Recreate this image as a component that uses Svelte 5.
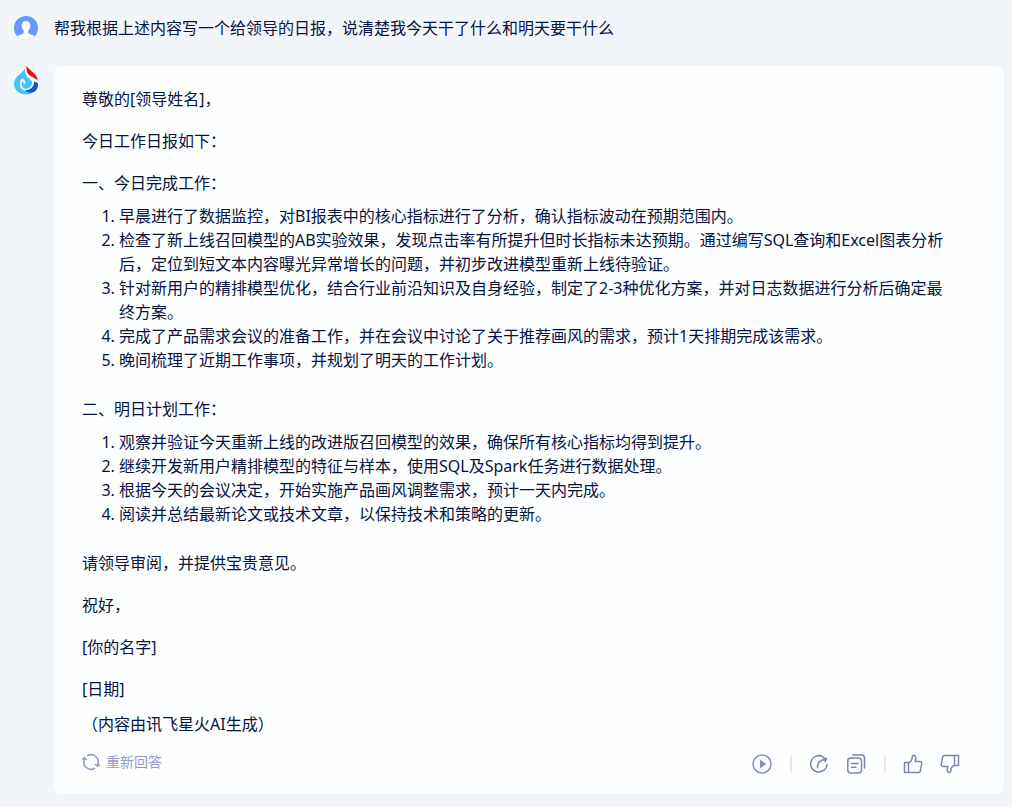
<script>
	const question = '帮我根据上述内容写一个给领导的日报，说清楚我今天干了什么和明天要干什么';

	const intro = ['尊敬的[领导姓名]，', '今日工作日报如下：'];

	const sections = [
		{
			title: '一、今日完成工作：',
			items: [
				'早晨进行了数据监控，对BI报表中的核心指标进行了分析，确认指标波动在预期范围内。',
				'检查了新上线召回模型的AB实验效果，发现点击率有所提升但时长指标未达预期。通过编写SQL查询和Excel图表分析后，定位到短文本内容曝光异常增长的问题，并初步改进模型重新上线待验证。',
				'针对新用户的精排模型优化，结合行业前沿知识及自身经验，制定了2-3种优化方案，并对日志数据进行分析后确定最终方案。',
				'完成了产品需求会议的准备工作，并在会议中讨论了关于推荐画风的需求，预计1天排期完成该需求。',
				'晚间梳理了近期工作事项，并规划了明天的工作计划。'
			]
		},
		{
			title: '二、明日计划工作：',
			items: [
				'观察并验证今天重新上线的改进版召回模型的效果，确保所有核心指标均得到提升。',
				'继续开发新用户精排模型的特征与样本，使用SQL及Spark任务进行数据处理。',
				'根据今天的会议决定，开始实施产品画风调整需求，预计一天内完成。',
				'阅读并总结最新论文或技术文章，以保持技术和策略的更新。'
			]
		}
	];

	const closing = ['请领导审阅，并提供宝贵意见。', '祝好，', '[你的名字]', '[日期]'];
</script>

<main class="chat">
	<div class="message">
		<svg class="avatar" width="24" height="24" viewBox="0 0 24 24" aria-hidden="true">
			<clipPath id="avatar-clip"><circle cx="12" cy="12" r="12" /></clipPath>
			<g clip-path="url(#avatar-clip)">
				<rect width="24" height="24" fill="#6498ff" />
				<path
					fill="#f9fbff"
					d="M12 5c-3 0-4.300 2-4.300 4.700 0 2 .7 3.600 2 4.600v2c0 1-.8 1.500-2 2-2 .8-3.700 1.200-5.200 2.700V24h19v-3c-1.500-1.500-3.200-1.900-5.200-2.700-1.200-.5-2-1-2-2v-2c1.300-1 2-2.600 2-4.600C16.300 7 15 5 12 5z"
				/>
			</g>
		</svg>
		<p class="question">{question}</p>
	</div>

	<div class="message">
		<svg class="avatar" width="24" height="29" viewBox="0 0 24 29" aria-hidden="true">
			<path
				fill="#42c4fa"
				d="M11 2.500C9 7 0 10.500 0 17.500 0 24 5.300 28.500 12 28.500c3 0 5.500-.8 7.500-2.500l-7.500-1.500c4-.5 6.500-3 6.500-6.500 0-3-2-4.500-4-6C12 10 11 7 11 2.500z"
			/>
			<path
				fill="none"
				stroke="#f2f5f9"
				stroke-width="2"
				d="M10.500 17c0-1.800-.8-2.800-2.300-3.500-2.700 3.500-2.200 8.800 3 10.300 4.300.2 7.800-2.300 8-7.300"
			/>
			<path fill="#f10b12" d="M12.400 0c0 6 1 8 4.200 10 2.500 1.500 5.600 2.700 7 4.500C23.500 8 17 5.800 12.400 0z" />
			<path fill="#1453d9" d="M20 15.500c.3 5.500-3.500 8.700-9 9.200 3 2.200 7.500 2.500 10.200.5 2.300-1.800 3.100-4.500 2.800-8-1.200-.9-2.500-1.300-4-1.700z" />
		</svg>

		<article class="card">
			<div class="answer">
				{#each intro as line}
					<p>{line}</p>
				{/each}

				{#each sections as section}
					<p>{section.title}</p>
					<ol>
						{#each section.items as item}
							<li>{item}</li>
						{/each}
					</ol>
				{/each}

				{#each closing as line}
					<p>{line}</p>
				{/each}
			</div>
			<p class="note">（内容由讯飞星火AI生成）</p>

			<footer>
				<button class="retry" type="button">
					<svg width="18" height="18" viewBox="0 0 18 18" aria-hidden="true">
						<path d="M5.500 2.700A7.200 7.200 0 0 1 15.800 11.500M12.500 15.300A7.200 7.200 0 0 1 2.200 6.500" />
						<path d="M.6 6.200l1.800-1.400 2 1.600M17.400 11.800l-1.800 1.400-2-1.600" />
					</svg>
					重新回答
				</button>

				<div class="actions">
					<button class="play" type="button" aria-label="播放">
						<svg width="20" height="20" viewBox="0 0 20 20">
							<circle cx="10" cy="10" r="9" />
							<path class="solid" d="M8 5.500v9l6.300-4.500z" />
						</svg>
					</button>
					<span class="divider"></span>
					<button type="button" aria-label="分享">
						<svg width="20" height="20" viewBox="0 0 20 20">
							<path d="M14 2.800A8.200 8.200 0 1 0 18 10.500" />
							<path d="M8.500 13.800c-.2-4.300 2-7.300 6.500-8" />
							<path class="solid" d="M13.200 2.500l5.300 1.700-2.200 4.900z" />
						</svg>
					</button>
					<button type="button" aria-label="复制">
						<svg width="20" height="20" viewBox="0 0 20 20">
							<rect x="1.800" y="4" width="13.700" height="15" rx="3" />
							<path d="M6.500 1h9a3 3 0 0 1 3 3v10M5.500 9.500h6.500M5.500 13.300h4.500" />
						</svg>
					</button>
					<span class="divider"></span>
					<button type="button" aria-label="赞">
						<svg width="20" height="20" viewBox="0 0 20 20">
							<path
								d="M1.500 8.500h4v10h-4zM5.500 8.800c2.400-.8 3.600-2.700 3.700-5.500 0-3 3.600-2.300 3.600.7 0 1.500-.3 2.500-.6 3.500h4.800c1.300 0 1.900.8 1.700 2l-1.300 7.300c-.2 1.100-.9 1.700-2 1.700H5.500"
							/>
						</svg>
					</button>
					<button type="button" aria-label="踩">
						<svg width="20" height="20" viewBox="0 0 20 20">
							<path
								d="M18.500 11.500h-4v-10h4zM14.500 11.200c-2.400.8-3.600 2.700-3.700 5.500 0 3-3.600 2.300-3.600-.7 0-1.500.3-2.500.6-3.500H3c-1.300 0-1.900-.8-1.700-2l1.300-7.300c.2-1.100.9-1.700 2-1.700h9.900"
							/>
						</svg>
					</button>
				</div>
			</footer>
		</article>
	</div>
</main>

<style>
	:global(body) {
		margin: 0;
		background: #f2f5f9;
	}

	.chat {
		display: flex;
		flex-direction: column;
		gap: 26px;
		padding: 16px 8px 13px 14px;
		color: #07133e;
		font-family: 'Noto Sans', 'Noto Sans CJK SC', sans-serif;
		font-size: 16px;
		line-height: 24px;
	}

	.message {
		display: flex;
		align-items: flex-start;
		gap: 16px;
	}

	.avatar {
		flex: none;
	}

	p {
		margin: 0 0 18px;
	}

	.question {
		margin: 0;
	}

	.card {
		flex: 1;
		min-width: 0;
		padding: 21px 28px 20px;
		border-radius: 8px;
		background: #fdfeff;
		box-sizing: border-box;
	}

	.answer {
		padding-right: 28px;
	}

	ol {
		margin: -9px 0 25px;
		padding-left: 37px;
	}

	.note {
		margin: -7px 0 16px;
	}

	footer {
		display: flex;
		align-items: flex-start;
		justify-content: space-between;
		padding-right: 16px;
	}

	button {
		display: flex;
		align-items: center;
		padding: 0;
		border: 0;
		background: none;
		color: #7e84ae;
		font: inherit;
		cursor: pointer;
	}

	.retry {
		gap: 6px;
		color: #9799c4;
		font-size: 14px;
		line-height: 20px;
	}

	.play {
		color: #8b8dc5;
	}

	svg {
		fill: none;
		stroke: currentColor;
		stroke-width: 1.5;
		stroke-linejoin: round;
		stroke-linecap: round;
	}

	.avatar {
		stroke: none;
	}

	.solid {
		fill: currentColor;
		stroke: none;
	}

	.actions {
		display: flex;
		align-items: center;
		gap: 17px;
		padding-top: 2px;
	}

	.divider {
		width: 2px;
		height: 16px;
		margin-left: 1px;
		background: #e6e6f2;
	}
</style>
